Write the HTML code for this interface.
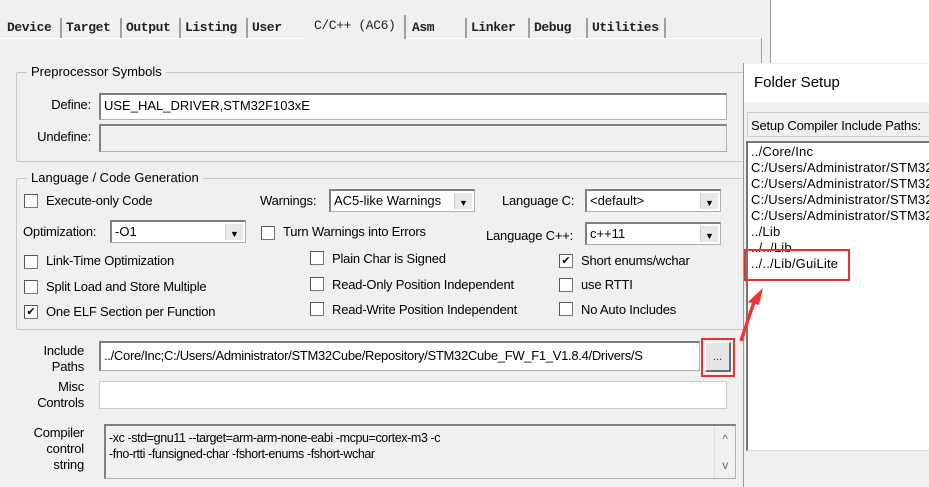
<!DOCTYPE html>
<html><head><style>
body{margin:0;width:929px;height:487px;background:#fff;position:relative;overflow:hidden;font-family:"Liberation Sans",sans-serif;font-size:13px;color:#000}
.a{position:absolute}
.main{left:0;top:0;width:770px;height:487px;background:#f0f0f0;border-right:1px solid #a0a0a0}
.tab{position:absolute;top:18px;height:20px;font-family:"Liberation Mono",monospace;font-size:13px;line-height:20px;border-right:2px solid #a0a0a0;padding-left:4px;box-sizing:border-box;font-weight:bold;color:#222;letter-spacing:-0.4px}
.grp{position:absolute;border:1px solid #c8c8c8;border-radius:2px}
.gl{position:absolute;background:#f0f0f0;padding:0 4px;font-size:13px}
.in{position:absolute;background:#fff;border:1px solid #b0b0b0;border-top:2px solid #808080;border-left:2px solid #808080;box-sizing:border-box;font-size:13px;line-height:22px;padding-left:3px;white-space:nowrap;overflow:hidden}
.cb{position:absolute;width:12px;height:12px;background:#fff;border:1px solid #777;border-top-color:#555;border-left-color:#555;font-size:11px;line-height:12px;text-align:center}
.t{position:absolute;white-space:nowrap;font-size:13px;letter-spacing:-0.2px}
.dd{position:absolute;right:2px;top:2px;width:17px;bottom:2px;background:#e8e8e8;border-left:1px solid #ccc;font-size:9px;text-align:center;line-height:20px}
.r{text-align:right}
</style></head><body>
<div class="a main"></div>
<div class="a" style="left:0;top:38px;width:304px;height:1px;background:#fff"></div>
<div class="a" style="left:406px;top:38px;width:356px;height:1px;background:#fff"></div>
<div class="a" style="left:761px;top:38px;width:1px;height:449px;background:#a0a0a0"></div>
<div class="tab" style="left:3px;width:59px">Device</div>
<div class="tab" style="left:62px;width:60px">Target</div>
<div class="tab" style="left:122px;width:59px">Output</div>
<div class="tab" style="left:181px;width:67px">Listing</div>
<div class="tab" style="left:248px;width:56px;border:none">User</div>
<div class="tab" style="left:306px;top:15px;width:100px;height:24px;line-height:22px;padding-left:8px;font-weight:normal">C/C++ (AC6)</div>
<div class="tab" style="left:408px;width:59px">Asm</div>
<div class="tab" style="left:467px;width:63px">Linker</div>
<div class="tab" style="left:530px;width:58px">Debug</div>
<div class="tab" style="left:588px;width:78px">Utilities</div>

<div class="grp" style="left:16px;top:72px;width:760px;height:88px"></div>
<div class="gl" style="left:27px;top:64px">Preprocessor Symbols</div>
<div class="t r" style="left:20px;width:71px;top:97px">Define:</div>
<div class="in" style="left:99px;top:93px;width:628px;height:27px">USE_HAL_DRIVER,STM32F103xE</div>
<div class="t r" style="left:20px;width:71px;top:129px">Undefine:</div>
<div class="in" style="left:99px;top:124px;width:628px;height:28px;background:#f0f0f0"></div>

<div class="grp" style="left:16px;top:178px;width:760px;height:150px"></div>
<div class="gl" style="left:27px;top:170px">Language / Code Generation</div>
<div class="cb" style="left:24px;top:194px"></div><div class="t" style="left:46px;top:193px">Execute-only Code</div>
<div class="t" style="left:260px;top:193px">Warnings:</div>
<div class="in" style="left:329px;top:189px;width:146px;height:23px;line-height:20px">AC5-like Warnings<div class="dd">▼</div></div>
<div class="t" style="left:502px;top:193px">Language C:</div>
<div class="in" style="left:585px;top:189px;width:136px;height:23px;line-height:20px">&lt;default&gt;<div class="dd">▼</div></div>
<div class="t" style="left:23px;top:224px">Optimization:</div>
<div class="in" style="left:110px;top:220px;width:136px;height:23px;line-height:20px">-O1<div class="dd">▼</div></div>
<div class="cb" style="left:261px;top:226px"></div><div class="t" style="left:283px;top:224px">Turn Warnings into Errors</div>
<div class="t" style="left:486px;top:228px">Language C++:</div>
<div class="in" style="left:585px;top:222px;width:136px;height:23px;line-height:20px">c++11<div class="dd">▼</div></div>
<div class="cb" style="left:24px;top:255px"></div><div class="t" style="left:46px;top:253px">Link-Time Optimization</div>
<div class="cb" style="left:310px;top:251px"></div><div class="t" style="left:332px;top:251px">Plain Char is Signed</div>
<div class="cb" style="left:559px;top:254px">✔</div><div class="t" style="left:581px;top:253px">Short enums/wchar</div>
<div class="cb" style="left:24px;top:280px"></div><div class="t" style="left:46px;top:279px">Split Load and Store Multiple</div>
<div class="cb" style="left:310px;top:277px"></div><div class="t" style="left:332px;top:277px">Read-Only Position Independent</div>
<div class="cb" style="left:559px;top:278px"></div><div class="t" style="left:581px;top:277px">use RTTI</div>
<div class="cb" style="left:24px;top:305px">✔</div><div class="t" style="left:46px;top:304px">One ELF Section per Function</div>
<div class="cb" style="left:310px;top:302px"></div><div class="t" style="left:332px;top:302px">Read-Write Position Independent</div>
<div class="cb" style="left:559px;top:302px"></div><div class="t" style="left:581px;top:302px">No Auto Includes</div>

<div class="t r" style="left:20px;width:64px;top:343px;line-height:16px">Include<br>Paths</div>
<div class="in" style="left:99px;top:341px;width:601px;height:30px;line-height:26px;letter-spacing:-0.3px">../Core/Inc;C:/Users/Administrator/STM32Cube/Repository/STM32Cube_FW_F1_V1.8.4/Drivers/S</div>
<div class="a" style="left:705px;top:342px;width:26px;height:30px;background:#e6e6e6;border:1px solid #fff;border-right:2px solid #707070;border-bottom:2px solid #707070;box-sizing:border-box;text-align:center;font-size:11px;line-height:28px;color:#805">...</div>
<div class="a" style="left:701px;top:338px;width:30px;height:35px;border:2px solid #e53333"></div>
<div class="t r" style="left:20px;width:64px;top:379px;line-height:16px">Misc<br>Controls</div>
<div class="in" style="left:99px;top:381px;width:628px;height:28px;border-width:1px;border-color:#ccc"></div>
<div class="t r" style="left:20px;width:64px;top:425px;line-height:16px">Compiler<br>control<br>string</div>
<div class="in" style="left:104px;top:424px;width:632px;height:55px;background:#f0f0f0;line-height:16px;padding-top:4px;font-size:12.5px;letter-spacing:-0.4px">-xc -std=gnu11 --target=arm-arm-none-eabi -mcpu=cortex-m3 -c<br>-fno-rtti -funsigned-char -fshort-enums -fshort-wchar
<div class="a" style="right:0;top:0;width:20px;bottom:0;border-left:1px solid #ddd;color:#666;font-size:12px;text-align:center;line-height:26px">^<br>v</div></div>

<div class="a" style="left:743px;top:63px;width:186px;height:424px;background:#f0f0f0;border-left:1px solid #999"></div>
<div class="a" style="left:744px;top:64px;width:185px;height:38px;background:#fff"></div>
<div class="t" style="left:754px;top:74px;font-size:15px;letter-spacing:0">Folder Setup</div>
<div class="a" style="left:747px;top:112px;width:182px;height:25px;border:1px solid #ccc;border-right:none;box-sizing:border-box"></div>
<div class="t" style="left:751px;top:118px">Setup Compiler Include Paths:</div>
<div class="a" style="left:746px;top:141px;width:183px;height:310px;background:#fff;border-left:2px solid #777;border-top:2px solid #777;border-bottom:1px solid #ddd;box-sizing:border-box"></div>
<div class="t" style="left:751px;top:144px;line-height:16px;letter-spacing:0.2px">../Core/Inc<br>C:/Users/Administrator/STM32<br>C:/Users/Administrator/STM32<br>C:/Users/Administrator/STM32<br>C:/Users/Administrator/STM32<br>../Lib<br>../../Lib<br>../../Lib/GuiLite</div>
<div class="a" style="left:744px;top:249px;width:102px;height:28px;border:2px solid #e53333"></div>
<svg class="a" style="left:736px;top:285px" width="32" height="60"><path d="M5 56 L19 14" stroke="#f03333" stroke-width="3.5"/><path d="M27 3 L12 17 L23 20 Z" fill="#f03333"/></svg>
</body></html>
